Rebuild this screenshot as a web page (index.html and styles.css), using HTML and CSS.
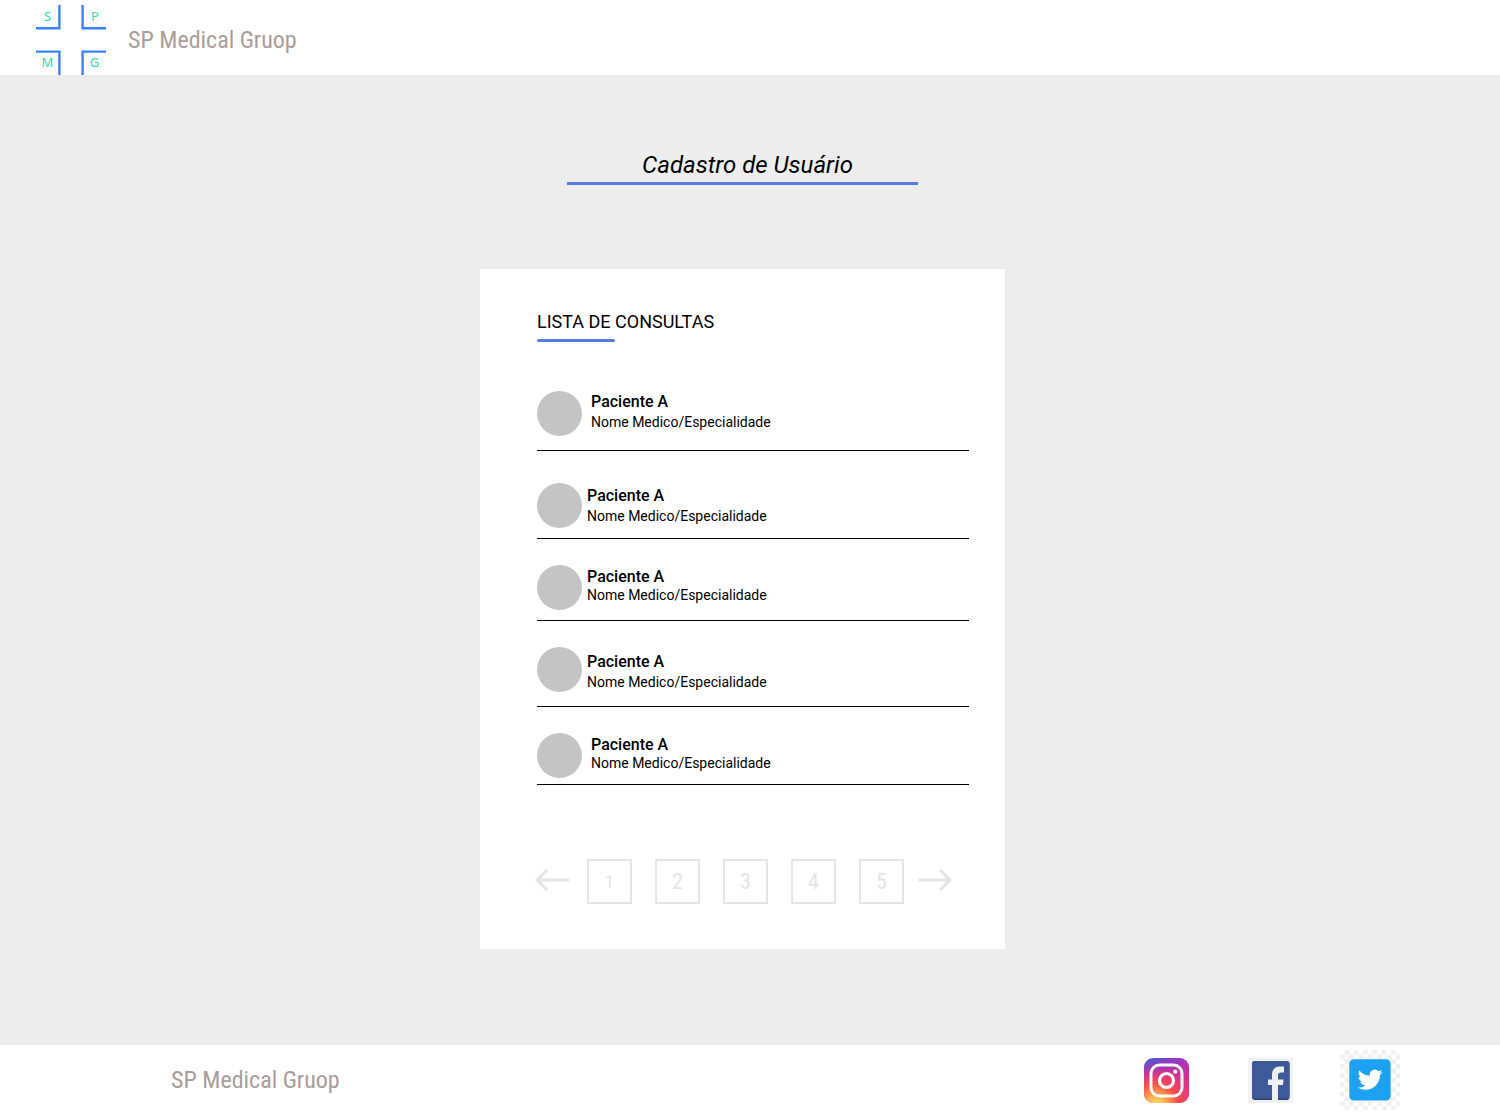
FILE: index.html
```html
<!DOCTYPE html>
<html lang="pt-BR">
<head>
<meta charset="utf-8">
<meta name="viewport" content="width=device-width, initial-scale=1">
<title>SP Medical Gruop</title>
<link rel="stylesheet" href="styles.css">
</head>
<body>
<header class="header">
  <svg class="logo" width="70" height="70" viewBox="0 0 70 70" aria-hidden="true">
    <g fill="none" stroke="#3b82f8" stroke-width="2.4">
      <path d="M0 23.2H23.4V0"/>
      <path d="M70 23.2H46.6V0"/>
      <path d="M0 46.6H23.4V70"/>
      <path d="M70 46.6H46.6V70"/>
    </g>
    <g class="logo-letters">
      <text x="11.5" y="16">S</text>
      <text x="59" y="16">P</text>
      <text x="11.5" y="62">M</text>
      <text x="58.5" y="62">G</text>
    </g>
  </svg>
  <span class="brand">SP Medical Gruop</span>
</header>

<main class="main">
  <h1 class="title">Cadastro de Usuário</h1>

  <section class="card">
    <h2 class="card-title">LISTA DE CONSULTAS</h2>
    <ul class="list">
      <li class="item item-roomy item-indent item-raised">
        <span class="avatar"></span>
        <div class="info"><strong class="name">Paciente A</strong><span class="detail">Nome Medico/Especialidade</span></div>
      </li>
      <li class="item item-after-roomy">
        <span class="avatar"></span>
        <div class="info"><strong class="name">Paciente A</strong><span class="detail">Nome Medico/Especialidade</span></div>
      </li>
      <li class="item item-close item-raised">
        <span class="avatar"></span>
        <div class="info"><strong class="name">Paciente A</strong><span class="detail">Nome Medico/Especialidade</span></div>
      </li>
      <li class="item item-roomy item-low">
        <span class="avatar"></span>
        <div class="info"><strong class="name">Paciente A</strong><span class="detail">Nome Medico/Especialidade</span></div>
      </li>
      <li class="item item-tight item-close item-indent item-raised">
        <span class="avatar"></span>
        <div class="info"><strong class="name">Paciente A</strong><span class="detail">Nome Medico/Especialidade</span></div>
      </li>
    </ul>

    <nav class="pager" aria-label="Páginas">
      <button class="arrow" type="button" aria-label="Anterior">
        <svg width="34" height="24" viewBox="0 0 34 24"><path d="M34 12H2M12 2L2 12L12 22"/></svg>
      </button>
      <div class="pages">
        <button class="page page-current" type="button" aria-current="page">1</button>
        <button class="page" type="button">2</button>
        <button class="page" type="button">3</button>
        <button class="page" type="button">4</button>
        <button class="page" type="button">5</button>
      </div>
      <button class="arrow" type="button" aria-label="Próxima">
        <svg width="34" height="24" viewBox="0 0 34 24"><path d="M0 12H32M22 2L32 12L22 22"/></svg>
      </button>
    </nav>
  </section>
</main>

<footer class="footer">
  <span class="brand">SP Medical Gruop</span>
  <div class="social">
    <a class="social-link" href="#" aria-label="Instagram">
      <svg width="45" height="45" viewBox="0 0 45 45">
        <defs>
          <linearGradient id="ig-base" x1="0.1" y1="0" x2="0.6" y2="1">
            <stop offset="0" stop-color="#4f5bd0"/>
            <stop offset="0.3" stop-color="#9b36c4"/>
            <stop offset="0.65" stop-color="#d62f92"/>
            <stop offset="1" stop-color="#e0407c"/>
          </linearGradient>
          <radialGradient id="ig-glow" cx="0.27" cy="1.05" r="0.95">
            <stop offset="0" stop-color="#ffe070"/>
            <stop offset="0.2" stop-color="#ffb950"/>
            <stop offset="0.5" stop-color="#fb4f48"/>
            <stop offset="0.75" stop-color="#ee3a6a" stop-opacity="0.6"/>
            <stop offset="1" stop-color="#d62f92" stop-opacity="0"/>
          </radialGradient>
        </defs>
        <rect width="45" height="45" rx="9" fill="url(#ig-base)"/>
        <rect width="45" height="45" rx="9" fill="url(#ig-glow)"/>
        <rect x="7" y="7" width="31" height="31" rx="8.5" fill="none" stroke="#fff" stroke-width="3"/>
        <circle cx="22.5" cy="22.5" r="7" fill="none" stroke="#fff" stroke-width="3.2"/>
        <circle cx="31.3" cy="13.7" r="2.1" fill="#fff"/>
      </svg>
    </a>
    <a class="social-link social-facebook" href="#" aria-label="Facebook">
      <svg width="45" height="45" viewBox="0 0 45 45">
        <rect width="45" height="45" fill="#f0f1f2"/>
        <rect x="4" y="3" width="37.5" height="39" rx="3" fill="#2d4373"/>
        <rect x="4" y="3" width="37.5" height="37.5" rx="3" fill="#3c5a99"/>
        <path d="M24 42V27H20V21.5H24V17C24 11.5 27 8.5 31.5 8.5H36V14.5H33C31 14.5 30 15.5 30 17.5V21.5H35.5L35 27H30V42Z" fill="#edf0f2"/>
      </svg>
    </a>
    <a class="social-link" href="#" aria-label="Twitter">
      <svg width="60" height="60" viewBox="0 0 60 60">
        <defs>
          <pattern id="checks" width="9.3" height="9.3" patternUnits="userSpaceOnUse">
            <path d="M4.65 0H9.3V4.65H4.65ZM0 4.65H4.65V9.3H0Z" fill="#f0f0f0"/>
          </pattern>
        </defs>
        <rect width="60" height="60" fill="url(#checks)"/>
        <rect x="9.3" y="9.3" width="41.3" height="41.3" rx="4.5" fill="#1da1f2"/>
        <g transform="translate(17.6 17.2) scale(1.04)">
          <path fill="#fff" d="M23.95 4.57a10 10 0 0 1-2.82.77 4.96 4.96 0 0 0 2.16-2.72c-.95.55-2.01.95-3.13 1.18a4.92 4.92 0 0 0-8.38 4.48C7.69 8.09 4.07 6.13 1.64 3.16a4.82 4.82 0 0 0-.67 2.47c0 1.71.87 3.21 2.19 4.1a4.9 4.9 0 0 1-2.23-.62v.06a4.92 4.92 0 0 0 3.95 4.83 5 5 0 0 1-2.21.08 4.94 4.94 0 0 0 4.6 3.42A9.87 9.87 0 0 1 0 19.54a14 14 0 0 0 7.55 2.21c9.05 0 14-7.5 14-13.98 0-.21 0-.42-.02-.63a9.94 9.94 0 0 0 2.46-2.55z"/>
        </g>
      </svg>
    </a>
  </div>
</footer>
</body>
</html>
```
FILE: styles.css
```css
* {
  box-sizing: border-box;
}

body {
  margin: 0;
  min-height: 100vh;
  display: flex;
  flex-direction: column;
  background: #fff;
  color: #000;
  font-family: Roboto, "Liberation Sans", sans-serif;
}

.header {
  display: flex;
  align-items: center;
  gap: 22px;
  padding: 5px 36px 0;
}

.logo {
  display: block;
}

.logo-letters {
  fill: #26e0b4;
  font-family: "Noto Sans", sans-serif;
  font-size: 13px;
  text-anchor: middle;
}

.brand {
  color: #a99c9a;
  font-family: "Roboto Condensed", Roboto, sans-serif;
  font-size: 24px;
  line-height: 28px;
}

.main {
  flex: 1;
  display: flex;
  flex-direction: column;
  align-items: center;
  padding: 75px 15px 96px 0;
  background: #ededed;
}

.title {
  width: 351px;
  max-width: 100%;
  margin: 0 0 84px;
  padding: 0 0 2px 10px;
  border-bottom: 3px solid #567be2;
  font-size: 24px;
  font-style: italic;
  font-weight: 400;
  line-height: 30px;
  text-align: center;
}

.card {
  width: 525px;
  max-width: 100%;
  padding: 41px 36px 45px 57px;
  background: #fff;
}

.card-title {
  margin: 0;
  font-size: 18px;
  font-weight: 400;
  line-height: 24px;
}

.card-title::after {
  content: "";
  display: block;
  width: 78px;
  height: 3px;
  margin-top: 5px;
  border-radius: 2px;
  background: #567be2;
}

.list {
  margin: 49px 0 74px;
  padding: 0;
  list-style: none;
}

.item {
  display: flex;
  align-items: center;
  gap: 5px;
  margin-top: 26px;
  padding-bottom: 10px;
  border-bottom: 1px solid #000;
}

.item-roomy {
  padding-bottom: 14px;
}

.item-after-roomy {
  margin-top: 32px;
}

.item-tight {
  padding-bottom: 6px;
}

.item-indent {
  gap: 9px;
}

.item:first-child {
  margin-top: 0;
}

.avatar {
  flex: none;
  width: 45px;
  height: 45px;
  border-radius: 50%;
  background: #c4c4c4;
}

.info {
  display: flex;
  flex-direction: column;
  line-height: 20px;
}

.item-close .info {
  line-height: 18px;
}

.item-raised .info {
  padding-bottom: 4px;
}

.item-low .info {
  align-self: flex-end;
}

.name {
  font-size: 16px;
  font-weight: 500;
}

.detail {
  font-size: 14px;
}

.pager {
  display: flex;
  align-items: center;
  margin-left: -2px;
}

.pages {
  display: flex;
  gap: 23px;
  margin: 0 14px 0 18px;
}

.page {
  width: 45px;
  height: 45px;
  padding: 0;
  border: 2px solid #e5e5e5;
  background: #fff;
  color: #e5e5e5;
  font-family: "Roboto Condensed", Roboto, sans-serif;
  font-size: 22px;
}

.page-current {
  font-size: 18px;
}

.arrow {
  padding: 0 0 4px;
  border: 0;
  background: none;
}

.arrow svg {
  display: block;
  fill: none;
  stroke: #e5e5e5;
  stroke-width: 3;
}

.footer {
  display: flex;
  align-items: center;
  justify-content: space-between;
  height: 75px;
  padding: 0 100px 5px 171px;
}

.social {
  display: flex;
  align-items: center;
  gap: 47px;
}

.social-facebook {
  margin-left: 12px;
}

.social-link svg {
  display: block;
}
```
